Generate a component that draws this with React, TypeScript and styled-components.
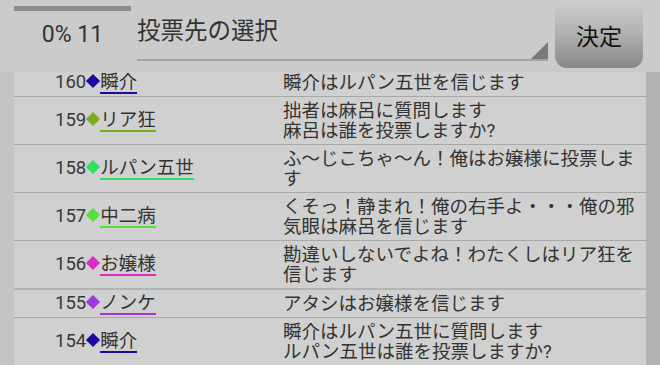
import React from "react";
import styled, { createGlobalStyle } from "styled-components";

const GlobalStyle = createGlobalStyle`
  html, body {
    margin: 0;
    padding: 0;
    background: #cbcbcb;
    overflow: hidden;
  }
  body {
    font-family: Roboto, "Noto Sans CJK JP", sans-serif;
    color: #333;
  }
`;

const Screen = styled.div`
  width: 660px;
  height: 365px;
  display: flex;
  flex-direction: column;
  background: #cbcbcb;
`;

const Header = styled.div`
  height: 72px;
  display: flex;
  align-items: flex-start;
  padding-left: 14px;
  box-sizing: border-box;
`;

const Counter = styled.div`
  width: 117px;
  display: flex;
  flex-direction: column;
  align-items: center;
`;

const Progress = styled.div`
  width: 100%;
  height: 5px;
  margin-top: 6px;
  background: #8c8c8c;
`;

const CounterText = styled.div`
  margin-top: 11px;
  font-size: 23px;
  line-height: 26px;
  color: #333;
`;

const Spinner = styled.div`
  position: relative;
  margin-left: 6px;
  width: 411px;
  height: 61px;
  border-bottom: 2px solid #a2a2a2;
  box-sizing: border-box;
  display: flex;
  align-items: center;
`;

const SpinnerLabel = styled.span`
  font-size: 23.5px;
  line-height: 30px;
  margin-top: 3px;
  color: #333;
`;

const SpinnerArrow = styled.svg`
  position: absolute;
  right: 0;
  bottom: 0;
`;

const DecideButton = styled.button`
  margin-left: 7px;
  width: 88px;
  height: 68px;
  border: none;
  border-radius: 12px;
  background: linear-gradient(#cdcdcd 0%, #b4b4b4 45%, #878787 100%);
  font-family: inherit;
  font-size: 23px;
  color: #111;
  padding: 0;
  padding-top: 2px;
`;

const ListFrame = styled.div`
  flex: 1;
  overflow: hidden;
  border-left: 14px solid #c4c4c4;
  border-right: 14px solid #b3b3b3;
`;

const List = styled.div`
  margin-top: -3px;
`;

const Row = styled.div<{ $heavy?: boolean }>`
  display: grid;
  grid-template-columns: 269px 1fr;
  background: #d0d0d0;
  border-bottom: ${(p) => (p.$heavy ? "2px solid #b4b4b4" : "1px solid #a8a8a8")};
`;

const Speaker = styled.div`
  display: flex;
  align-items: center;
  padding-left: 41px;
  font-size: 18.5px;
  line-height: 20px;
  color: #383838;
`;

const Diamond = styled.span<{ $color: string }>`
  display: inline-block;
  width: 10px;
  height: 10px;
  margin: 0 2px 0 2px;
  background: ${(p) => p.$color};
  transform: rotate(45deg);
  vertical-align: middle;
  position: relative;
  top: -2px;
`;

const Name = styled.span<{ $color: string }>`
  display: inline-block;
  color: #333;
  border-bottom: 2px solid ${(p) => p.$color};
`;

const Message = styled.div`
  padding: 4px 0 3px;
  font-size: 18.5px;
  line-height: 20px;
  color: #333;
`;

type Entry = {
  no: number;
  name: string;
  color: string;
  lines: string[];
  heavy?: boolean;
};

const entries: Entry[] = [
  { no: 160, name: "瞬介", color: "#1c0c9e", lines: ["瞬介はルパン五世を信じます"] },
  { no: 159, name: "リア狂", color: "#7aae1e", lines: ["拙者は麻呂に質問します", "麻呂は誰を投票しますか?"] },
  { no: 158, name: "ルパン五世", color: "#2ee05e", lines: ["ふ〜じこちゃ〜ん！俺はお嬢様に投票します"] },
  { no: 157, name: "中二病", color: "#55e040", lines: ["くそっ！静まれ！俺の右手よ・・・俺の邪気眼は麻呂を信じます"] },
  { no: 156, name: "お嬢様", color: "#dc2cc4", lines: ["勘違いしないでよね！わたくしはリア狂を信じます"], heavy: true },
  { no: 155, name: "ノンケ", color: "#a03ae0", lines: ["アタシはお嬢様を信じます"] },
  { no: 154, name: "瞬介", color: "#1c0c9e", lines: ["瞬介はルパン五世に質問します", "ルパン五世は誰を投票しますか?"] },
];

const App = () => {
  return (
    <Screen>
      <GlobalStyle />
      <Header>
        <Counter>
          <Progress />
          <CounterText>0% 11</CounterText>
        </Counter>
        <Spinner>
          <SpinnerLabel>投票先の選択</SpinnerLabel>
          <SpinnerArrow width="17" height="17" viewBox="0 0 17 17">
            <polygon points="17,0 17,17 0,17" fill="#787878" />
          </SpinnerArrow>
        </Spinner>
        <DecideButton>決定</DecideButton>
      </Header>
      <ListFrame>
        <List>
          {entries.map((e) => (
            <Row key={e.no} $heavy={e.heavy}>
              <Speaker>
                <span>
                  {e.no}
                  <Diamond $color={e.color} />
                  <Name $color={e.color}>{e.name}</Name>
                </span>
              </Speaker>
              <Message>
                {e.lines.map((l, i) => (
                  <div key={i}>{l}</div>
                ))}
              </Message>
            </Row>
          ))}
        </List>
      </ListFrame>
    </Screen>
  );
};

export default App;
